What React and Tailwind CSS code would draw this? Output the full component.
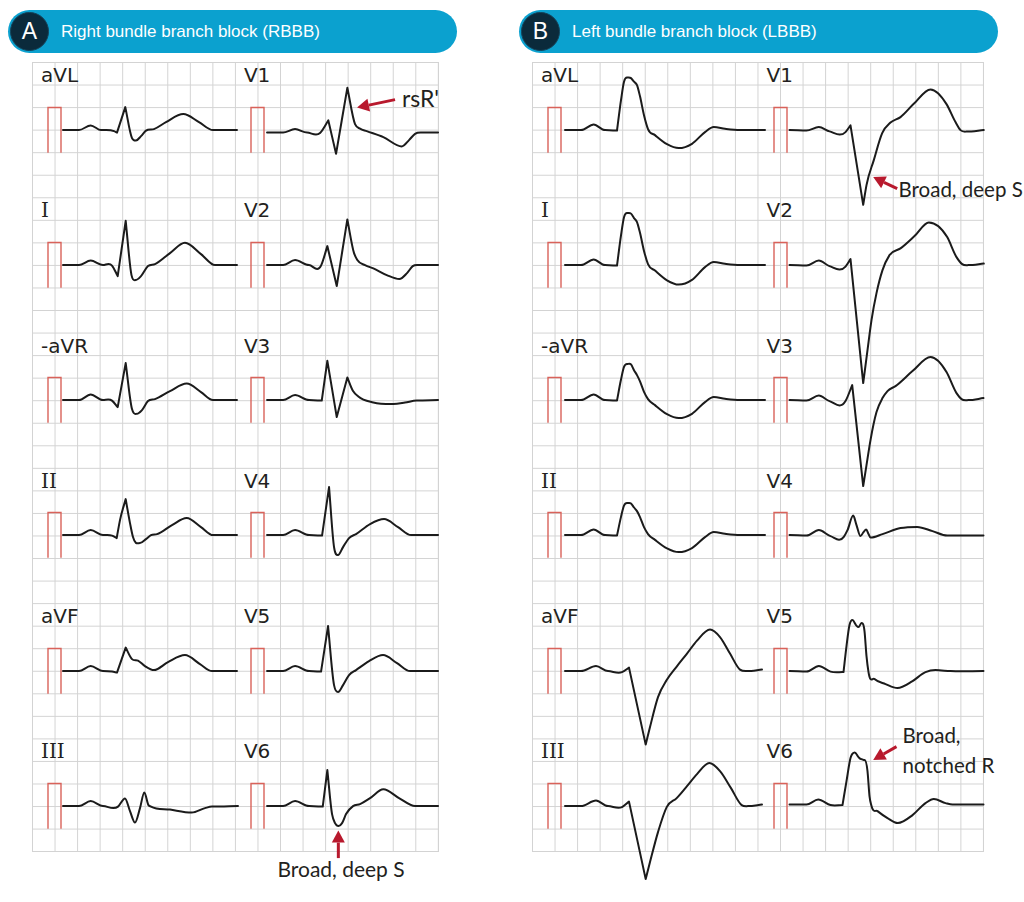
const LINE = '#1b1b1b'
const RED = '#b8192d'

// smooth curve through [x, y, flag] points; flag 1 = sharp corner, 2 = flat tangent
function tracePath(pts) {
  const n = pts.length
  const xs = pts.map((p) => p[0])
  const ys = pts.map((p) => p[1])
  const d = []
  for (let i = 0; i < n - 1; i++) d.push((ys[i + 1] - ys[i]) / (xs[i + 1] - xs[i]))
  const mIn = []
  const mOut = []
  for (let i = 0; i < n; i++) {
    const f = pts[i][2]
    if (f === 2) {
      mIn[i] = 0
      mOut[i] = 0
    } else if (i === 0) {
      mIn[i] = mOut[i] = d[0]
    } else if (i === n - 1) {
      mIn[i] = mOut[i] = d[n - 2]
    } else if (f === 1) {
      mIn[i] = d[i - 1]
      mOut[i] = d[i]
    } else {
      const h0 = xs[i] - xs[i - 1]
      const h1 = xs[i + 1] - xs[i]
      mIn[i] = mOut[i] = (h1 * d[i - 1] + h0 * d[i]) / (h0 + h1)
    }
  }
  const f = (v) => v.toFixed(2)
  let s = `M${f(xs[0])},${f(ys[0])}`
  for (let i = 0; i < n - 1; i++) {
    const h = xs[i + 1] - xs[i]
    s += ` C${f(xs[i] + h / 3)},${f(ys[i] + (mOut[i] * h) / 3)} ${f(xs[i + 1] - h / 3)},${f(ys[i + 1] - (mIn[i + 1] * h) / 3)} ${f(xs[i + 1])},${f(ys[i + 1])}`
  }
  return s
}

const lbbbLimb = (p, sh, t) => [
  [565, 0, 2], [581, 0, 2], [593.7, -5.5, 2], [605, 0, 2], [617, 0.5, 1],
  [621, p * 0.57], [624, p * 0.92], [627, p, 2], [631, p * 0.99],
  [634, sh + (p - sh) * 0.45], [637, sh], [640, sh * 0.75], [644, sh * 0.33], [648, -1],
  [655, t * 0.28], [667, t * 0.78], [678.7, t, 2], [692, t * 0.76], [705, 2],
  [713.7, -3, 2], [725, -1.3], [740, 0, 2], [765, 0],
]

const rbbbLeads = [
  { name: 'aVL', pts: [[63, 0, 2], [79, 0, 2], [90.7, -4.7, 2], [101, 0, 2], [114, 1], [117, 2.5, 1], [125.3, -23, 1], [132, 8], [136, 10.5, 2], [141, 6], [146, 0.5], [154, -1], [166, -8], [183.3, -16, 2], [199, -8], [213, 0, 2], [237, 0]] },
  {
    name: 'V1',
    pts: [[267, 2.5, 2], [283, 2.5, 2], [295, -1, 2], [307, 2.5, 2], [320, 3], [328.3, -9.7, 1], [336, 23.7, 1], [347.3, -42.3, 1], [355, -6], [360, -1.5], [366.7, 1], [383.3, 7], [401.7, 16.3, 2], [409, 10], [415, 3.7], [422, 2.5, 2], [438, 2.5]],
    note: 'rsr',
  },
  { name: 'I', serif: true, pts: [[63, 0, 2], [79, 0, 2], [90.7, -4.5, 2], [103, 0, 2], [112, 0.5], [117.7, 11, 1], [125.7, -44.3, 1], [131.5, 10], [135.5, 15, 2], [141, 11], [148, 1], [155, -1], [170, -12], [185, -22.3, 2], [201, -11], [215, 0, 2], [237, 0]] },
  { name: 'V2', pts: [[267, 0, 2], [283, 0, 2], [295, -5, 2], [309, 0, 2], [321, 0.5], [327.3, -19, 1], [336.7, 21, 1], [347.3, -45.7, 1], [354, -12], [357.3, -5], [365, 0], [373.3, 3.3], [386.7, 10], [399.3, 14, 2], [407, 8], [412.7, 1], [420, 0, 2], [438, 0]] },
  { name: '-aVR', pts: [[63, 0, 2], [79, 0, 2], [90.7, -5.5, 2], [103, 0, 2], [112, 0.5], [117.7, 7, 1], [125.7, -37, 1], [132, 9], [137, 13.7, 2], [142, 10], [148, 1], [155, -1], [170, -9], [186.7, -16.5, 2], [201, -8], [213, 0, 2], [237, 0]] },
  { name: 'V3', pts: [[267, 0, 2], [283, 0, 2], [295, -5, 2], [309, 0, 2], [321.7, 0.5, 1], [327.3, -39.3, 1], [336.7, 17, 1], [347.3, -22.6, 1], [353, -9], [358.3, -3.6], [373.3, 2.4], [393.3, 4, 2], [405, 2.5], [416.7, 0.4, 2], [438, 0]] },
  { name: 'II', serif: true, pts: [[63, 0, 2], [79, 0, 2], [90.7, -5, 2], [103, 0, 2], [112, 0.5], [116.7, 3, 1], [120, -15], [125.7, -36, 1], [130, -12], [133, 2], [140, 8, 2], [146, 4], [151, 0], [157, -1], [172, -10], [186.7, -17, 2], [201, -8], [213, 0, 2], [237, 0]] },
  { name: 'V4', pts: [[267, 0, 2], [283, 0, 2], [295, -5, 2], [309, 0, 2], [322, 0.5, 1], [329, -48, 1], [334, 12], [338, 20, 2], [343, 12], [349, 3], [356, -1], [370, -11], [384, -16, 2], [398, -8], [411, 0, 2], [438, 0]] },
  { name: 'aVF', pts: [[63, 0, 2], [79, 0, 2], [90.7, -5, 2], [103, 0, 2], [112, 0.5], [117, 1.5, 1], [125.7, -23.5, 1], [132, -12], [138, -10.5], [145, -5], [154, -1, 2], [168, -9], [185, -16, 2], [200, -7], [212, 0, 2], [237, 0]] },
  { name: 'V5', pts: [[267, 0, 2], [283, 0, 2], [295, -5, 2], [309, 0, 2], [321, 0.5, 1], [328, -45, 1], [334, 14], [338, 21, 2], [343, 14], [349, 4], [356, -1], [369, -10], [383, -16, 2], [397, -8], [410, 0, 2], [438, 0]] },
  { name: 'III', serif: true, pts: [[63, 0, 2], [79, 0, 2], [90.7, -5, 2], [103, 0, 2], [118, 0.5], [125, -7.7, 2], [130, 5], [135, 16.5, 2], [140, 2], [144.3, -13.7, 2], [148.5, -1], [151, 0.5], [170, 3.5], [191.7, 6.5, 2], [205, 2], [212, 0.5, 2], [238, 0]] },
  {
    name: 'V6',
    pts: [[267, 0, 2], [283, 0, 2], [295, -5, 2], [309, 0, 2], [322.7, 0.5, 1], [327.3, -36, 1], [332, 8], [335, 17], [338.5, 20, 2], [342, 17], [346, 8], [353, 0], [360, -2], [370, -8], [383.3, -16.8, 2], [399, -8], [415, 0, 2], [438, 0]],
    note: 'deepS',
  },
]

const lbbbLeads = [
  { name: 'aVL', pts: lbbbLimb(-52.5, -45, 18) },
  {
    name: 'V1',
    pts: [[789, 0, 2], [806, 0.5, 2], [818.3, -3, 2], [829, 1.3], [845, 2], [850, -4.7, 1], [862.7, 74.7, 1], [866, 55], [873.3, 30], [881.7, 3], [890, -7.5], [900, -13], [913, -26], [930, -40.7, 2], [946, -26], [955, -8], [960, 0], [966, 1.5, 2], [983.3, 0]],
    note: 'lbbbS',
  },
  { name: 'I', serif: true, pts: lbbbLimb(-52, -43, 19.5) },
  { name: 'V2', pts: [[789, 0, 2], [806, 0.5, 2], [818.3, -4.5, 2], [829, 1], [845, 1.5], [850, -6, 1], [862.7, 118, 1], [867, 85], [871, 55], [876, 28], [882, 5], [889, -10], [900, -16.7], [914, -29], [928.3, -42.7, 2], [946.7, -28], [956, -8], [961.7, -1], [968, 0, 2], [983.3, -1.5]] },
  { name: '-aVR', pts: lbbbLimb(-36, -25, 18) },
  { name: 'V3', pts: [[789, 0, 2], [806, 0.5, 2], [818.3, -4.5, 2], [829, 1], [845, 1], [851.7, -15, 1], [862.7, 86, 1], [866, 65], [870, 40], [876, 12], [882, -2], [887, -9], [895, -14], [912, -29], [930, -43, 2], [946, -28], [956, -7], [961, -1], [968, 0, 2], [983, -2]] },
  { name: 'II', serif: true, pts: lbbbLimb(-32, -24, 17) },
  { name: 'V4', pts: [[789, 0, 2], [806, 0.5, 2], [818.3, -5, 2], [830, 1], [843.3, 1.7], [847, -5], [852.7, -19.5, 2], [856, -10], [860, 1, 2], [863, -3], [865.7, -5.5, 2], [868, -1], [870, 2.5, 2], [882, -1], [900, -7], [916.7, -8.2, 2], [932, -4], [946.7, 0.5, 2], [983, 0.5]] },
  { name: 'aVF', pts: [[565, 0, 2], [581, 0, 2], [596, -5, 2], [608, 0, 2], [622, 1], [629, -3.5, 1], [645.7, 73.5, 1], [650, 56], [658, 26], [666.7, 9], [676.7, -4.5], [687, -17.5], [697, -30.5], [710, -41.5, 2], [720, -34], [730, -17.5], [740, -1.5], [747, 0, 2], [762, -1.5]] },
  { name: 'V5', pts: [[789, 0, 2], [806, 0.5, 2], [818.3, -5, 2], [830, 0.5], [843, 1, 1], [846, -25], [849, -46], [852, -51, 2], [855.5, -46], [858, -44, 2], [861, -48, 2], [864, -40], [866, -15], [868, 1], [874, 8], [885, 13], [897, 17, 2], [912, 10], [925, 1], [935, -1, 2], [950, 0], [983, 0]] },
  { name: 'III', serif: true, pts: [[565, 0, 2], [581, 0, 2], [596, -5.5, 2], [608, 0, 2], [622, 1], [629, -4.5, 1], [645.7, 73, 1], [650, 56], [658, 26], [666.7, 1], [676.7, -8], [687, -20], [697, -32], [709.3, -43, 2], [720, -35], [731, -18], [741.7, -1], [748, 0, 2], [762, -1.5]] },
  {
    name: 'V6',
    pts: [[789, -1.5, 2], [806, -1.5, 2], [817.7, -6.5, 2], [830, -1], [842, -1, 1], [846, -25], [850, -48], [854.3, -53.5, 2], [858, -49], [860.5, -47, 2], [864, -46, 2], [867, -35], [869, -10], [871, 0], [877, 5], [887, 12], [897.3, 17, 2], [912, 9], [925, -3], [933.3, -7, 2], [945, -3], [952, -1.5, 2], [983, -1.5]],
    note: 'notchedR',
  },
]

function Arrow({ x1, y1, x2, y2 }) {
  const a = Math.atan2(y2 - y1, x2 - x1)
  const len = 12
  const half = 6.5
  const bx = x2 - len * Math.cos(a)
  const by = y2 - len * Math.sin(a)
  const p1 = `${bx + half * Math.sin(a)},${by - half * Math.cos(a)}`
  const p2 = `${bx - half * Math.sin(a)},${by + half * Math.cos(a)}`
  return (
    <g>
      <line x1={x1} y1={y1} x2={bx} y2={by} stroke={RED} strokeWidth="3" />
      <polygon points={`${x2},${y2} ${p1} ${p2}`} fill={RED} />
    </g>
  )
}

function Note({ kind }) {
  if (kind === 'rsr') {
    return (
      <g>
        <Arrow x1={395} y1={-30.5} x2={357} y2={-22.5} />
        <text x={402} y={-23.5} className="font-['Lato',sans-serif] text-[23px] fill-[#231f20]">rsR'</text>
      </g>
    )
  }
  if (kind === 'deepS') {
    return (
      <g>
        <Arrow x1={338.3} y1={52} x2={338.3} y2={24.5} />
        <text x={341} y={70.5} textAnchor="middle" className="font-['Lato',sans-serif] text-[21px] fill-[#231f20]">Broad, deep S</text>
      </g>
    )
  }
  if (kind === 'lbbbS') {
    return (
      <g>
        <Arrow x1={896.7} y1={58.6} x2={872.7} y2={47} />
        <text x={898} y={66.5} className="font-['Lato',sans-serif] text-[20.5px] fill-[#231f20]">Broad, deep S</text>
      </g>
    )
  }
  return (
    <g>
      <Arrow x1={896} y1={-59.5} x2={872.7} y2={-46.2} />
      <text x={902} y={-63} className="font-['Lato',sans-serif] text-[20.5px] fill-[#231f20]">Broad,</text>
      <text x={902} y={-32.7} className="font-['Lato',sans-serif] text-[20.5px] fill-[#231f20]">notched R</text>
    </g>
  )
}

function Lead({ lead, left, width }) {
  return (
    <div className="flex flex-col h-[135.3px]">
      <div
        className={`shrink-0 h-[22.55px] pl-[9px] pt-[3px] text-[20px] leading-[20px] text-[#231f20] ${
          lead.serif ? "font-['DejaVu_Serif',serif]" : "font-['DejaVu_Sans',sans-serif]"
        }`}
      >
        {lead.name}
      </div>
      <svg width={width} height={112.75} viewBox={`0 -45.1 ${width} 112.75`} className="shrink-0 overflow-visible">
        <path d="M16,22.55 V-22.55 H29 V22.55" fill="none" stroke="#d9625a" strokeWidth="1.4" />
        <g transform={`translate(${-left},0)`}>
          <path d={tracePath(lead.pts)} fill="none" stroke={LINE} strokeWidth="2" strokeLinejoin="round" strokeLinecap="round" />
          {lead.note && <Note kind={lead.note} />}
        </g>
      </svg>
    </div>
  )
}

function Header({ letter, title }) {
  return (
    <div className="h-[43px] rounded-full bg-[#0ba1cf] flex items-center pl-[2px]">
      <div className="w-[39px] h-[39px] rounded-full bg-[#0b2a3b] border-[1.5px] border-[#15435a] flex items-center justify-center text-white text-[23px] font-['Liberation_Sans',sans-serif]">
        {letter}
      </div>
      <span className="ml-[12px] text-white text-[17px] font-['Liberation_Sans',sans-serif]">{title}</span>
    </div>
  )
}

const gridBg =
  'bg-[linear-gradient(to_right,#d3d3d3_1px,transparent_1px),linear-gradient(to_bottom,#d3d3d3_1px,transparent_1px)] bg-[size:22.55px_22.55px] border-r border-b border-[#d3d3d3]'

export default function App() {
  return (
    <div className="w-[1024px] h-[902px] bg-white flex items-start pt-[10px] overflow-hidden">
      <div className="ml-[8px] w-[449px] shrink-0">
        <Header letter="A" title="Right bundle branch block (RBBB)" />
        <div className={`mt-[9px] ml-[24px] w-[407px] h-[790px] ${gridBg}`}>
          <div className="grid grid-cols-[202.95px_202.95px]">
            {rbbbLeads.map((lead, i) => (
              <Lead key={i} lead={lead} left={i % 2 === 0 ? 32 : 234.95} width={202.95} />
            ))}
          </div>
        </div>
      </div>
      <div className="ml-[62px] w-[479px] shrink-0">
        <Header letter="B" title="Left bundle branch block (LBBB)" />
        <div className={`mt-[9px] ml-[13px] w-[452px] h-[790px] ${gridBg}`}>
          <div className="grid grid-cols-[225.5px_225.5px]">
            {lbbbLeads.map((lead, i) => (
              <Lead key={i} lead={lead} left={i % 2 === 0 ? 532 : 757.5} width={225.5} />
            ))}
          </div>
        </div>
      </div>
    </div>
  )
}
